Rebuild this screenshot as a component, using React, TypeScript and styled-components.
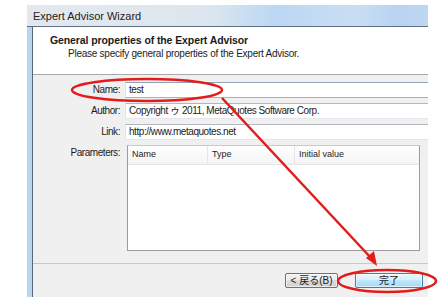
import React from "react";
import styled, { createGlobalStyle } from "styled-components";

const GlobalStyle = createGlobalStyle`
  html, body {
    margin: 0;
    background: #ffffff;
  }
  body {
    font-family: "Liberation Sans", "Noto Sans CJK JP", sans-serif;
    color: #1b1b1b;
  }
`;

const Page = styled.div`
  position: relative;
  width: 442px;
  height: 302px;
  padding: 5px 0 0 27px;
  box-sizing: border-box;
  overflow: hidden;
`;

const Window = styled.div`
  width: 401px;
  height: 292px;
  display: flex;
  flex-direction: column;
  overflow: hidden;
`;

const TitleBar = styled.div`
  height: 22px;
  flex: none;
  box-sizing: border-box;
  display: flex;
  align-items: center;
  padding-left: 6px;
  font-size: 11px;
  color: #222;
  background: linear-gradient(
    90deg,
    #e3e8ee 0%,
    #dde6ef 45%,
    #bcd7f3 62%,
    #c9def4 82%,
    #b9d4f1 92%,
    #bdd7f2 100%
  );
  border-bottom: 1px solid #5f6f82;
`;

const Frame = styled.div`
  flex: 1;
  display: flex;
  min-height: 0;
`;

const FrameEdge = styled.div`
  width: 5px;
  flex: none;
  background: #bcd5ee;
  border-right: 1px solid #56677c;
`;

const Client = styled.div`
  flex: 1;
  display: flex;
  flex-direction: column;
  background: #f0f0f0;
  min-width: 0;
`;

const Header = styled.div`
  height: 48px;
  flex: none;
  box-sizing: border-box;
  background: #ffffff;
  border-bottom: 1px solid #a9a9a9;
  padding: 7px 0 0 17px;
`;

const HeaderTitle = styled.div`
  font-size: 10.5px;
  font-weight: bold;
  letter-spacing: -0.1px;
  line-height: 13px;
`;

const HeaderSub = styled.div`
  font-size: 10px;
  letter-spacing: -0.25px;
  line-height: 13px;
  padding-left: 18px;
`;

const Form = styled.div`
  flex: 1;
  display: flex;
  flex-direction: column;
  gap: 5px;
  padding: 7px 0 0 0;
  border-bottom: 1px solid #c8c8c8;
`;

const Row = styled.div<{ $top?: boolean }>`
  display: flex;
  align-items: ${({ $top }) => ($top ? "flex-start" : "center")};
  gap: 5px;
`;

const Label = styled.div`
  width: 87px;
  flex: none;
  text-align: right;
  font-size: 10px;
  letter-spacing: -0.45px;
  line-height: 16px;
`;

const Input = styled.div<{ $focused?: boolean }>`
  flex: 1;
  height: 16px;
  box-sizing: border-box;
  margin-right: -10px;
  background: #ffffff;
  border: 1px solid #dfe3e8;
  border-top-color: ${({ $focused }) => ($focused ? "#8ea4bd" : "#b3b7be")};
  border-bottom-color: ${({ $focused }) => ($focused ? "#9fb3c9" : "#e2e5ea")};
  font-size: 10px;
  letter-spacing: -0.45px;
  line-height: 14px;
  padding-left: 3px;
  white-space: nowrap;
`;

const Grid = styled.div`
  width: 293px;
  height: 106px;
  flex: none;
  margin-left: 2px;
  box-sizing: border-box;
  background: #ffffff;
  border: 1px solid #9c9c9c;
  border-top-color: #c9c9c9;
`;

const GridHead = styled.div`
  display: grid;
  grid-template-columns: 80px 87px 1fr;
  height: 18px;
  background: linear-gradient(#ffffff, #f3f4f6);
  border-bottom: 1px solid #e4e6e9;
`;

const HeadCell = styled.div`
  font-size: 9px;
  line-height: 17px;
  padding-left: 4px;
  border-right: 1px solid #e4e6e9;
  &:last-child {
    border-right: none;
  }
`;

const SideButtons = styled.div`
  display: flex;
  flex-direction: column;
  gap: 8px;
  margin-left: 5px;
`;

const SideButton = styled.div`
  width: 30px;
  height: 15px;
  box-sizing: border-box;
  border: 1px solid #a8a8a8;
  background: #e4e4e4;
`;

const Footer = styled.div`
  height: 33px;
  flex: none;
  display: flex;
  align-items: center;
  padding: 0 0 0 252px;
  gap: 17px;
`;

const Button = styled.div<{ $primary?: boolean }>`
  height: 15px;
  width: ${({ $primary }) => ($primary ? "68px" : "53px")};
  box-sizing: border-box;
  border-radius: 2px;
  border: 1px solid ${({ $primary }) => ($primary ? "#3c7fb1" : "#707070")};
  background: ${({ $primary }) =>
    $primary
      ? "linear-gradient(#eaf6fd 0%, #d9f0fc 45%, #bee6fd 50%, #a7d9f5 100%)"
      : "linear-gradient(#f2f2f2 0%, #ebebeb 45%, #dddddd 50%, #cfcfcf 100%)"};
  box-shadow: inset 0 0 0 1px rgba(255, 255, 255, 0.6);
  display: flex;
  align-items: center;
  justify-content: center;
  font-size: 10px;
  line-height: 13px;
  color: #1b1b1b;
`;

const Overlay = styled.svg`
  position: absolute;
  left: 0;
  top: 0;
  pointer-events: none;
`;

const App = () => (
  <>
    <GlobalStyle />
    <Page>
      <Window>
        <TitleBar>Expert Advisor Wizard</TitleBar>
        <Frame>
          <FrameEdge />
          <Client>
            <Header>
              <HeaderTitle>General properties of the Expert Advisor</HeaderTitle>
              <HeaderSub>Please specify general properties of the Expert Advisor.</HeaderSub>
            </Header>
            <Form>
              <Row>
                <Label>Name:</Label>
                <Input $focused>test</Input>
              </Row>
              <Row>
                <Label>Author:</Label>
                <Input>Copyright ゥ 2011, MetaQuotes Software Corp.</Input>
              </Row>
              <Row>
                <Label>Link:</Label>
                <Input>http://www.metaquotes.net</Input>
              </Row>
              <Row $top>
                <Label>Parameters:</Label>
                <Grid>
                  <GridHead>
                    <HeadCell>Name</HeadCell>
                    <HeadCell>Type</HeadCell>
                    <HeadCell>Initial value</HeadCell>
                  </GridHead>
                </Grid>
                <SideButtons>
                  <SideButton />
                  <SideButton />
                </SideButtons>
              </Row>
            </Form>
            <Footer>
              <Button>&lt; 戻る(B)</Button>
              <Button $primary>完了</Button>
            </Footer>
          </Client>
        </Frame>
      </Window>
      <Overlay width="442" height="302" viewBox="0 0 442 302">
        <g fill="none" stroke="#e21b1b" strokeWidth="2.5">
          <ellipse cx="147" cy="90" rx="75" ry="11" />
          <ellipse cx="387" cy="281" rx="49" ry="11" />
          <line x1="222" y1="98" x2="372" y2="259" />
        </g>
        <polygon points="377,266 366,258 374,251" fill="#e21b1b" />
      </Overlay>
    </Page>
  </>
);

export default App;
